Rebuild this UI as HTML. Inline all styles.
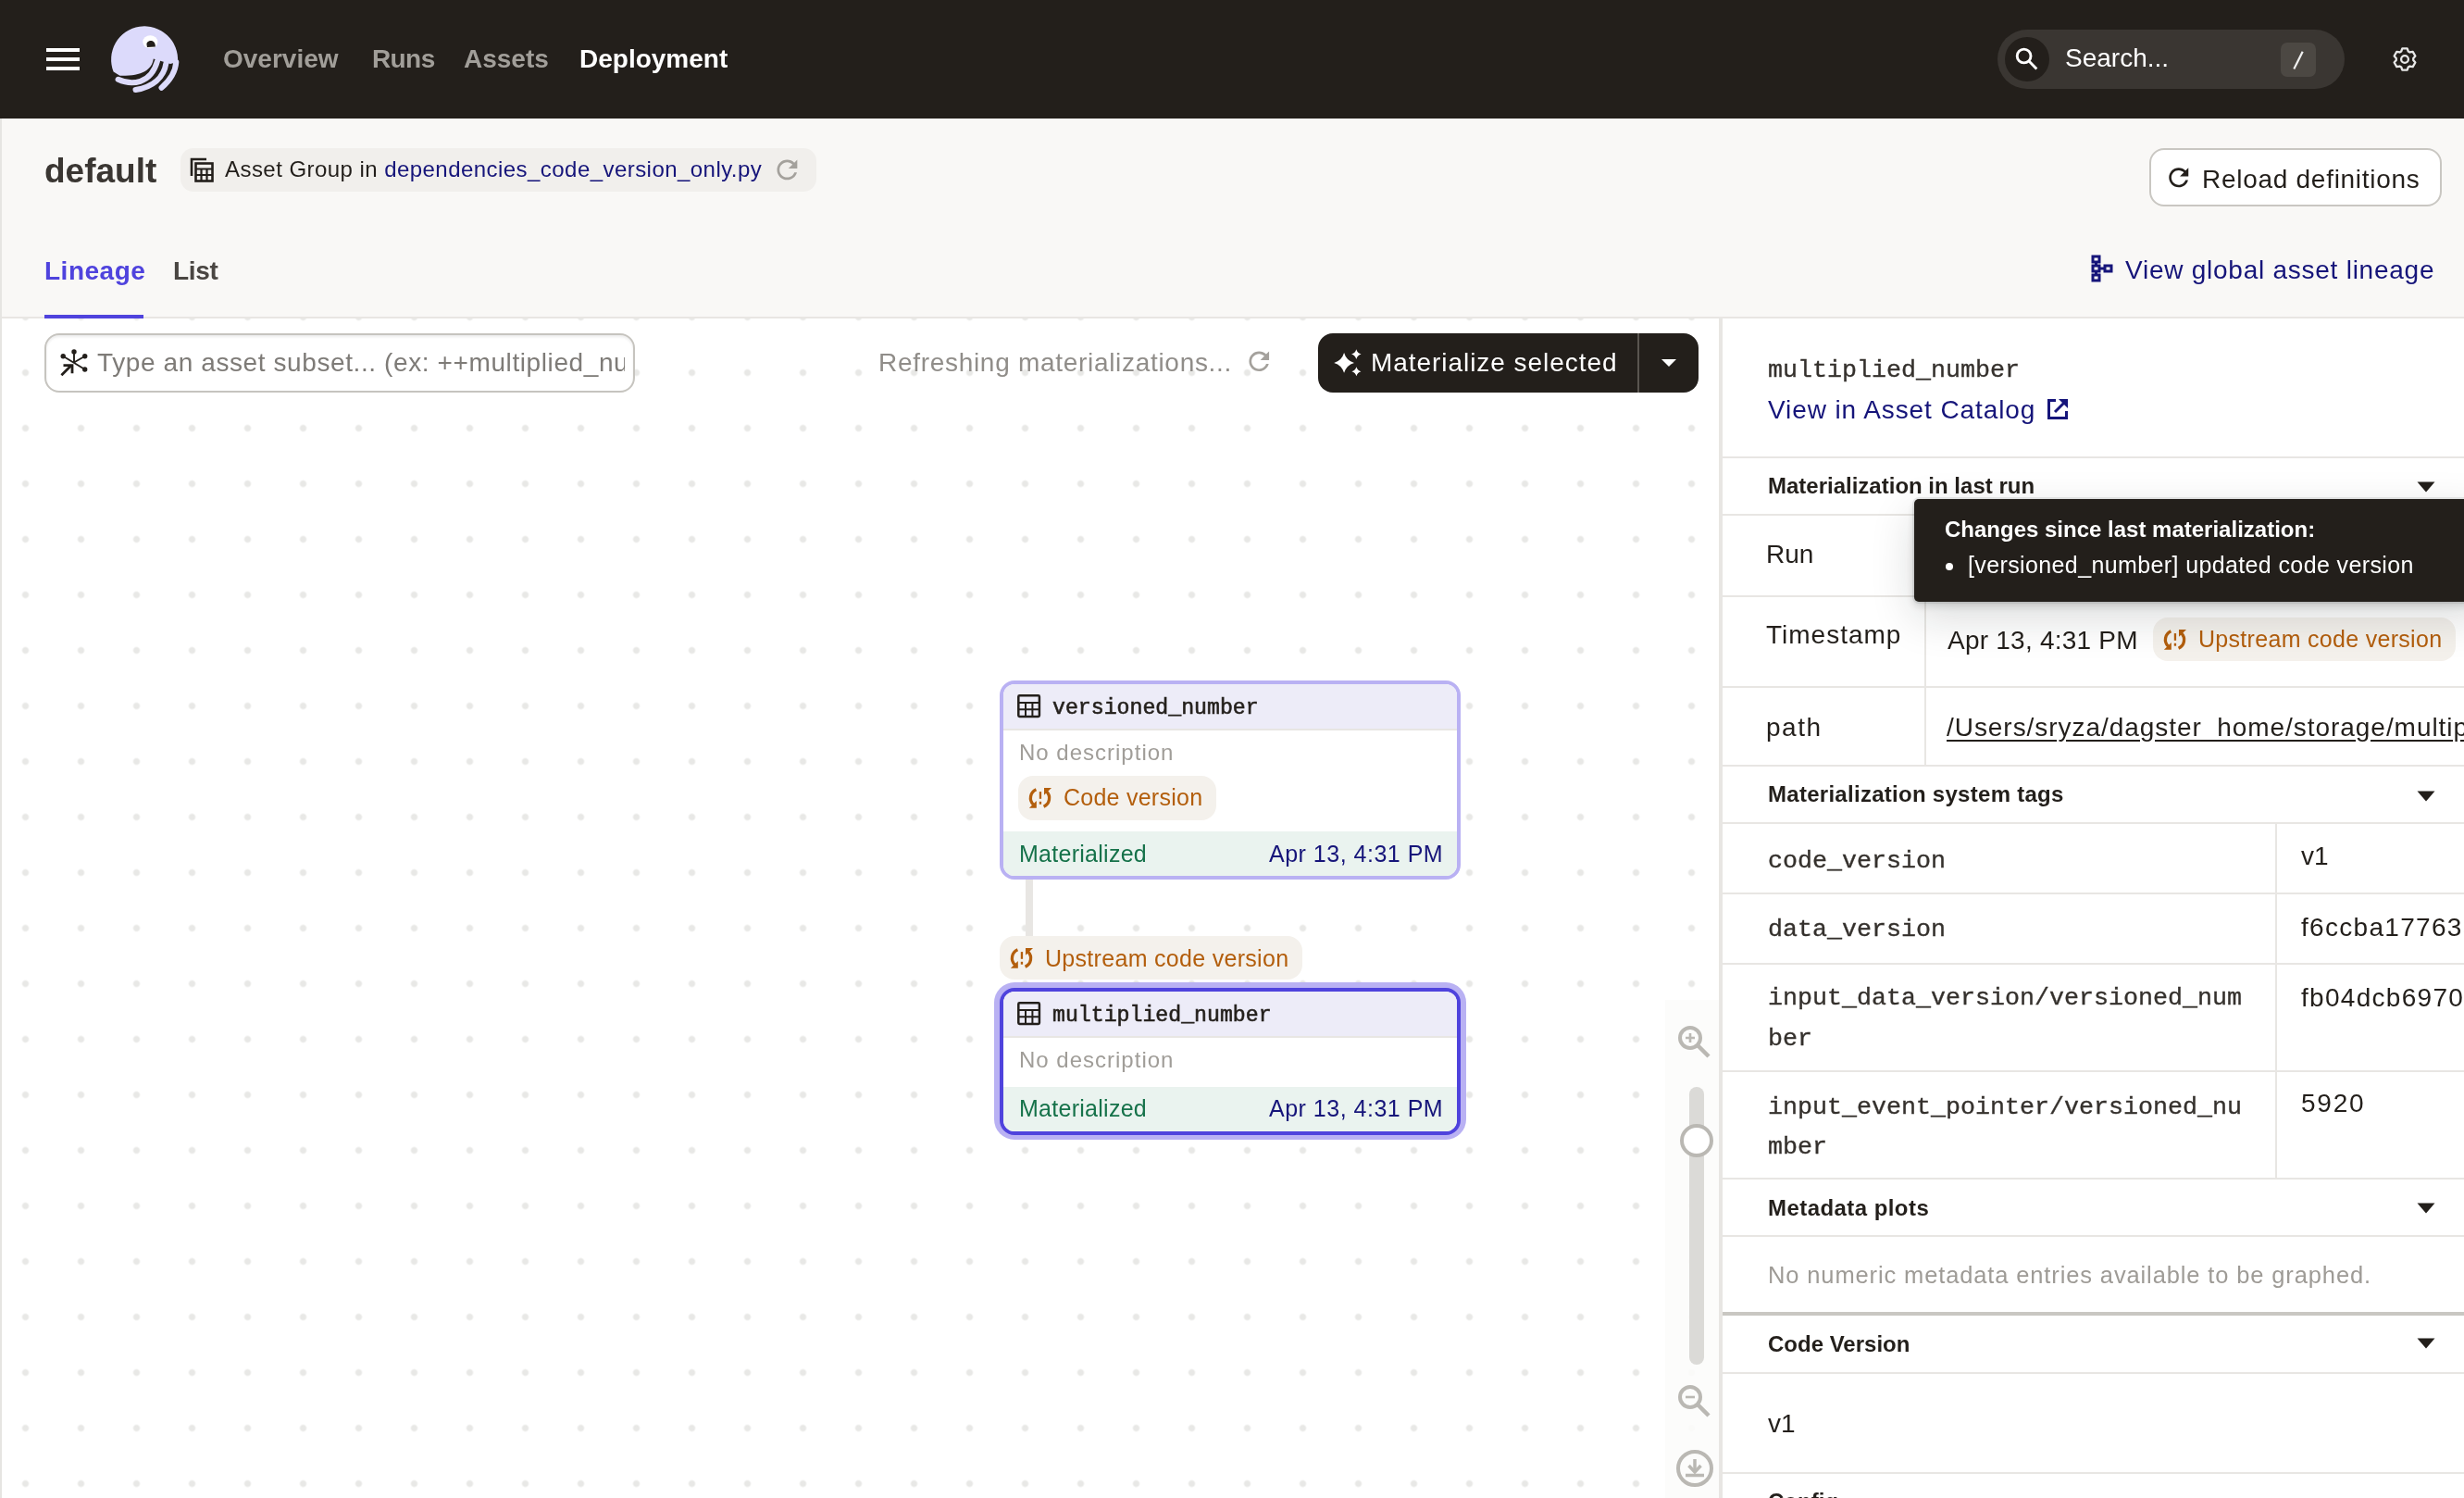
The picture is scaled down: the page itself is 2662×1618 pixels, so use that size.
<!DOCTYPE html>
<html><head><meta charset="utf-8">
<style>
html,body{margin:0;padding:0;}
.t{will-change:transform;}
body{width:2662px;height:1618px;overflow:hidden;position:relative;background:#fff;font-family:"Liberation Sans",sans-serif;color:#231F1B;}
.a{position:absolute;}
.t{position:absolute;white-space:nowrap;line-height:1;}
.mono{font-family:"Liberation Mono",monospace;-webkit-text-stroke:0.35px currentColor;}
svg{position:absolute;overflow:visible;}
</style></head><body>

<!-- TOP NAV -->
<div class="a" style="left:0;top:0;width:2662px;height:128px;background:#231F1B;"></div>
<div class="a" style="left:50px;top:52px;width:36px;height:4px;background:#fff;"></div>
<div class="a" style="left:50px;top:62px;width:36px;height:4px;background:#fff;"></div>
<div class="a" style="left:50px;top:72px;width:36px;height:4px;background:#fff;"></div>
<!-- logo -->
<svg style="left:112px;top:20px;" width="88" height="88" viewBox="0 0 88 88">
  <path d="M10.6 57.5 A36 36 0 1 1 80 47 L72 49 L62 46 L53.8 43.5 C52 56 41 62.2 17.5 61.8 Z" fill="#DCDAFB"/>
  <path d="M15.6 65.8 C30 72.5 51 71 58 46" stroke="#DCDAFB" stroke-width="6" fill="none" stroke-linecap="round"/>
  <path d="M34.5 77 C53 74 65 64 67.5 48" stroke="#DCDAFB" stroke-width="6" fill="none" stroke-linecap="round"/>
  <path d="M62.5 74.8 C71.5 67 77.5 58 78.3 47" stroke="#DCDAFB" stroke-width="6" fill="none" stroke-linecap="round"/>
  <ellipse cx="50.3" cy="25.2" rx="8" ry="7" fill="#fff"/>
  <path d="M46.5 28.5 C46 25.5 48.5 24 51 24 C54 24 56 26.5 55.8 30.5 L47 31 Z" fill="#231F1B"/>
</svg>
<div class="t" style="left:241px;top:50px;font-size:28px;font-weight:bold;color:#A19E99;">Overview</div>
<div class="t" style="left:402px;top:50px;font-size:28px;font-weight:bold;color:#A19E99;letter-spacing:-0.6px;">Runs</div>
<div class="t" style="left:501px;top:50px;font-size:28px;font-weight:bold;color:#A19E99;">Assets</div>
<div class="t" style="left:626px;top:50px;font-size:28px;font-weight:bold;color:#fff;">Deployment</div>
<!-- search -->
<div class="a" style="left:2158px;top:32px;width:375px;height:64px;border-radius:32px;background:#3A3632;"></div>
<div class="a" style="left:2166px;top:40px;width:48px;height:48px;border-radius:24px;background:#231F1B;"></div>
<svg style="left:2176px;top:50px;" width="28" height="28" viewBox="0 0 28 28">
  <circle cx="10.6" cy="10.5" r="7.4" stroke="#fff" stroke-width="2.9" fill="none"/>
  <path d="M15.8 15.8 L24.3 24.5" stroke="#fff" stroke-width="2.9"/>
</svg>
<div class="t" style="left:2231px;top:49px;font-size:28px;color:#fff;">Search...</div>
<div class="a" style="left:2464px;top:46px;width:38px;height:37px;border-radius:7px;background:#4C4843;"></div>
<svg style="left:2464px;top:46px;" width="38" height="37" viewBox="0 0 38 37"><path d="M14.3 28.5 L23.7 9.8" stroke="#F0F0F0" stroke-width="2.2"/></svg>
<!-- gear -->
<svg style="left:2585px;top:51px;" width="26" height="26" viewBox="0 0 26 26">
  <path d="M9.22 4.50 L10.32 1.40 L15.68 1.40 L16.78 4.50 L18.47 5.48 L21.70 4.88 L24.38 9.52 L22.25 12.03 L22.25 13.97 L24.38 16.48 L21.70 21.12 L18.47 20.52 L16.78 21.50 L15.68 24.60 L10.32 24.60 L9.22 21.50 L7.53 20.52 L4.30 21.12 L1.62 16.48 L3.75 13.97 L3.75 12.03 L1.62 9.52 L4.30 4.88 L7.53 5.48 Z" stroke="#E8E8E8" stroke-width="2.3" fill="none" stroke-linejoin="round"/>
  <circle cx="13" cy="13" r="3.9" stroke="#E8E8E8" stroke-width="2.3" fill="none"/>
</svg>

<!-- left border -->
<div class="a" style="left:0;top:128px;width:2px;height:1490px;background:#E6E5E2;"></div>

<!-- PAGE HEADER -->
<div class="a" style="left:2px;top:128px;width:2660px;height:214px;background:#F9F8F6;"></div>
<div class="a" style="left:2px;top:342px;width:2660px;height:2px;background:#E8E6E3;"></div>


<div class="t" style="left:48px;top:166px;font-size:37px;font-weight:bold;color:#3A3632;">default</div>
<div class="a" style="left:195px;top:160px;width:687px;height:47px;border-radius:14px;background:#F1EFEC;"></div>
<svg style="left:204px;top:169px;" width="30" height="30" viewBox="0 0 30 30">
  <path d="M3 21 V3 H19" stroke="#231F1B" stroke-width="2.6" fill="none"/>
  <rect x="7.5" y="7.5" width="18" height="19" stroke="#231F1B" stroke-width="2.6" fill="none"/>
  <path d="M7.5 13.5 H25.5 M7.5 20 H25.5 M13.5 13.5 V26.5 M19.5 13.5 V26.5" stroke="#231F1B" stroke-width="2.2"/>
</svg>
<div class="t" style="left:243px;top:171px;font-size:24px;color:#231F1B;letter-spacing:0.45px;">Asset Group in <span style="color:#16157A;">dependencies_code_version_only.py</span></div>
<svg style="left:833.8px;top:167.3px;" width="32.8" height="32.8" viewBox="0 0 24 24"><path d="M17.65 6.35C16.2 4.9 14.21 4 12 4c-4.42 0-7.99 3.58-7.99 8s3.57 8 7.99 8c3.73 0 6.84-2.55 7.73-6h-2.08c-.82 2.33-3.04 4-5.65 4-3.31 0-6-2.69-6-6s2.69-6 6-6c1.66 0 3.14.69 4.22 1.78L13 11h7V4l-2.35 2.35z" fill="#A4A19C"/></svg>
<!-- reload button -->
<div class="a" style="left:2322px;top:160px;width:312px;height:59px;border:2px solid #C9C7C2;border-radius:16px;background:#fff;"></div>
<svg style="left:2338.2px;top:176.1px;" width="31.5" height="31.5" viewBox="0 0 24 24"><path d="M17.65 6.35C16.2 4.9 14.21 4 12 4c-4.42 0-7.99 3.58-7.99 8s3.57 8 7.99 8c3.73 0 6.84-2.55 7.73-6h-2.08c-.82 2.33-3.04 4-5.65 4-3.31 0-6-2.69-6-6s2.69-6 6-6c1.66 0 3.14.69 4.22 1.78L13 11h7V4l-2.35 2.35z" fill="#231F1B"/></svg>
<div class="t" style="left:2379px;top:180px;font-size:28px;color:#231F1B;letter-spacing:0.72px;">Reload definitions</div>
<!-- tabs -->
<div class="t" style="left:48px;top:279px;font-size:28px;font-weight:bold;color:#4F43DD;letter-spacing:0.5px;">Lineage</div>
<div class="t" style="left:187px;top:279px;font-size:28px;font-weight:bold;color:#4A4642;letter-spacing:-0.3px;">List</div>
<div class="a" style="left:48px;top:340px;width:107px;height:4px;background:#4F43DD;"></div>
<svg style="left:2258px;top:274px;" width="28" height="32" viewBox="0 0 28 32">
  <rect x="3" y="3" width="7" height="6" stroke="#16157A" stroke-width="3" fill="none"/>
  <rect x="3" y="13" width="7" height="6" stroke="#16157A" stroke-width="3" fill="none"/>
  <rect x="3" y="23" width="7" height="6" stroke="#16157A" stroke-width="3" fill="none"/>
  <rect x="16" y="13" width="7" height="6" stroke="#16157A" stroke-width="3" fill="none"/>
  <path d="M6.5 9 V13 M6.5 19 V23 M10 16 H16" stroke="#16157A" stroke-width="3"/>
</svg>
<div class="t" style="left:2296px;top:278px;font-size:28px;color:#16157A;letter-spacing:0.75px;">View global asset lineage</div>

<!-- GRAPH AREA -->
<div class="a" style="left:2px;top:344px;width:1855px;height:1274px;background-color:#fff;background-image:radial-gradient(circle at 30px 30px,#E8E8E6 3.1px,rgba(255,255,255,0) 4.1px);background-size:60px 60px;background-position:-4.5px -31.5px;"></div>
<!-- asset selection input -->
<div class="a" style="left:48px;top:360px;width:634px;height:60px;border:2px solid #C6C4BF;border-radius:16px;background:#fff;box-shadow:inset 0 2px 3px rgba(0,0,0,0.08);overflow:hidden;"></div>
<svg style="left:64px;top:376px;" width="32" height="32" viewBox="0 0 32 32">
  <circle cx="16" cy="3.9" r="2.7" fill="#231F1B"/>
  <circle cx="4.2" cy="8.7" r="2.7" fill="#231F1B"/>
  <circle cx="27.7" cy="8.7" r="2.7" fill="#231F1B"/>
  <circle cx="27.7" cy="23" r="2.7" fill="#231F1B"/>
  <path d="M16 4 V15.3 M4.2 8.7 L27.7 23 M27.7 8.7 L16.3 15.3" stroke="#231F1B" stroke-width="1.9"/>
  <path d="M2.4 29.2 L13.2 18.6" stroke="#231F1B" stroke-width="2.8"/>
  <path d="M4.5 18.6 H14 V27.2" stroke="#231F1B" stroke-width="2.8" fill="none"/>
</svg>
<div class="a" style="left:105px;top:362px;width:570px;height:60px;overflow:hidden;">
  <div class="t" style="left:0;top:16px;font-size:28px;color:#7E7B77;letter-spacing:0.6px;">Type an asset subset... (ex: ++multiplied_number)</div>
</div>
<div class="t" style="left:949px;top:378px;font-size:28px;color:#908D89;letter-spacing:0.7px;">Refreshing materializations...</div>
<svg style="left:1343.75px;top:373.75px;" width="32.5" height="32.5" viewBox="0 0 24 24"><path d="M17.65 6.35C16.2 4.9 14.21 4 12 4c-4.42 0-7.99 3.58-7.99 8s3.57 8 7.99 8c3.73 0 6.84-2.55 7.73-6h-2.08c-.82 2.33-3.04 4-5.65 4-3.31 0-6-2.69-6-6s2.69-6 6-6c1.66 0 3.14.69 4.22 1.78L13 11h7V4l-2.35 2.35z" fill="#A4A19C"/></svg>
<!-- materialize button -->
<div class="a" style="left:1424px;top:360px;width:411px;height:64px;border-radius:16px;background:#231F1B;"></div>
<div class="a" style="left:1769px;top:360px;width:2px;height:64px;background:#5A5550;"></div>
<svg style="left:1440px;top:377px;" width="32" height="32" viewBox="0 0 32 32">
  <path d="M12.1 4.0 Q14.498 12.502 23.0 14.9 Q14.498 17.298000000000002 12.1 25.8 Q9.702 17.298000000000002 1.1999999999999993 14.9 Q9.702 12.502 12.1 4.0 Z" fill="#fff"/>
  <path d="M25.3 0.2999999999999998 Q26.466 4.433999999999999 30.6 5.6 Q26.466 6.766 25.3 10.899999999999999 Q24.134 6.766 20.0 5.6 Q24.134 4.433999999999999 25.3 0.2999999999999998 Z" fill="#fff"/>
  <path d="M25.4 19.2 Q26.5 23.099999999999998 30.4 24.2 Q26.5 25.3 25.4 29.2 Q24.299999999999997 25.3 20.4 24.2 Q24.299999999999997 23.099999999999998 25.4 19.2 Z" fill="#fff"/>
</svg>
<div class="t" style="left:1481px;top:378px;font-size:28px;color:#fff;letter-spacing:0.95px;">Materialize selected</div>
<svg style="left:1794px;top:387px;" width="18" height="10" viewBox="0 0 18 10"><path d="M1 1 H17 L9 9 Z" fill="#fff"/></svg>


<!-- NODE 1 -->
<div class="a" style="left:1080px;top:735px;width:490px;height:207px;border:4px solid #B9B1F3;border-radius:16px;background:#fff;overflow:hidden;">
  <div class="a" style="left:0;top:0;width:490px;height:48px;background:#EDECF8;border-bottom:2px solid #E8E6E3;"></div>
  <div class="a" style="left:0;top:159px;width:490px;height:48px;background:#EAF3EF;"></div>
</div>
<svg style="left:1099px;top:750px;" width="26" height="26" viewBox="0 0 26 26">
  <rect x="1.3" y="1.3" width="22.6" height="22.6" rx="1.2" stroke="#231F1B" stroke-width="2.5" fill="none"/>
  <path d="M1.3 9 H24 M1.3 16.2 H24 M9 9 V24 M16.4 9 V24" stroke="#231F1B" stroke-width="2"/>
</svg>
<div class="t mono" style="left:1137px;top:754px;font-size:23.2px;color:#231F1B;-webkit-text-stroke:0.6px #231F1B;">versioned_number</div>
<div class="t" style="left:1101px;top:801px;font-size:24px;color:#A09D98;letter-spacing:1px;">No description</div>
<div class="a" style="left:1100px;top:838px;width:214px;height:48px;border-radius:16px;background:#F4F1EC;"></div>
<svg style="left:1111px;top:851px;" width="26" height="24" viewBox="0 0 26 24">
  <path d="M8.4 1.8 A10 10 0 0 0 5.4 18.1" stroke="#B35E0C" stroke-width="3.3" fill="none"/>
  <path d="M0.9 21.7 L8.8 21.7 L8.8 14 Z" fill="#B35E0C"/>
  <path d="M16.6 20.2 A10 10 0 0 0 19.6 3.9" stroke="#B35E0C" stroke-width="3.3" fill="none"/>
  <path d="M17 0 L25 0 L17 7.8 Z" fill="#B35E0C"/>
  <rect x="11.8" y="4.1" width="2.3" height="7.7" fill="#B35E0C"/>
  <rect x="11.8" y="14.8" width="2.3" height="2.9" fill="#B35E0C"/>
</svg>
<div class="t" style="left:1149px;top:849px;font-size:25px;color:#B35E0C;letter-spacing:0.25px;">Code version</div>
<div class="t" style="left:1101px;top:910px;font-size:25px;color:#16724A;letter-spacing:0.27px;">Materialized</div>
<div class="t" style="left:1371px;top:910px;font-size:25px;color:#16157A;letter-spacing:0.5px;">Apr 13, 4:31 PM</div>
<!-- edge -->
<div class="a" style="left:1108px;top:950px;width:8px;height:61px;background:#E8E6E3;"></div>
<div class="a" style="left:1080px;top:1011px;width:327px;height:47px;border-radius:16px;background:#F4F1EC;"></div>
<svg style="left:1091px;top:1024px;" width="26" height="24" viewBox="0 0 26 24">
  <path d="M8.4 1.8 A10 10 0 0 0 5.4 18.1" stroke="#B35E0C" stroke-width="3.3" fill="none"/>
  <path d="M0.9 21.7 L8.8 21.7 L8.8 14 Z" fill="#B35E0C"/>
  <path d="M16.6 20.2 A10 10 0 0 0 19.6 3.9" stroke="#B35E0C" stroke-width="3.3" fill="none"/>
  <path d="M17 0 L25 0 L17 7.8 Z" fill="#B35E0C"/>
  <rect x="11.8" y="4.1" width="2.3" height="7.7" fill="#B35E0C"/>
  <rect x="11.8" y="14.8" width="2.3" height="2.9" fill="#B35E0C"/>
</svg>
<div class="t" style="left:1129px;top:1023px;font-size:25px;color:#B35E0C;letter-spacing:0.3px;">Upstream code version</div>
<!-- NODE 2 -->
<div class="a" style="left:1074px;top:1061px;width:510px;height:170px;border-radius:22px;background:#B9B1F3;"></div>
<div class="a" style="left:1080px;top:1067px;width:490px;height:151px;border:4px solid #4F43DD;border-radius:16px;background:#fff;overflow:hidden;">
  <div class="a" style="left:0;top:0;width:490px;height:48px;background:#EDECF8;border-bottom:2px solid #E8E6E3;"></div>
  <div class="a" style="left:0;top:103px;width:490px;height:48px;background:#EAF3EF;"></div>
</div>
<svg style="left:1099px;top:1082px;" width="26" height="26" viewBox="0 0 26 26">
  <rect x="1.3" y="1.3" width="22.6" height="22.6" rx="1.2" stroke="#231F1B" stroke-width="2.5" fill="none"/>
  <path d="M1.3 9 H24 M1.3 16.2 H24 M9 9 V24 M16.4 9 V24" stroke="#231F1B" stroke-width="2"/>
</svg>
<div class="t mono" style="left:1137px;top:1086px;font-size:23.2px;color:#231F1B;-webkit-text-stroke:0.6px #231F1B;">multiplied_number</div>
<div class="t" style="left:1101px;top:1133px;font-size:24px;color:#A09D98;letter-spacing:1px;">No description</div>
<div class="t" style="left:1101px;top:1185px;font-size:25px;color:#16724A;letter-spacing:0.27px;">Materialized</div>
<div class="t" style="left:1371px;top:1185px;font-size:25px;color:#16157A;letter-spacing:0.5px;">Apr 13, 4:31 PM</div>

<!-- ZOOM CONTROLS -->
<div class="a" style="left:1799px;top:1080px;width:58px;height:538px;background:rgba(252,252,251,0.88);"></div>
<svg style="left:1808px;top:1104px;" width="44" height="44" viewBox="0 0 44 44">
  <circle cx="18" cy="17" r="11" stroke="#BAB8B3" stroke-width="4" fill="none"/>
  <path d="M26 25 L38 37" stroke="#BAB8B3" stroke-width="4.5"/>
  <path d="M13 17 H23 M18 12 V22" stroke="#BAB8B3" stroke-width="2.6"/>
</svg>
<div class="a" style="left:1825px;top:1174px;width:16px;height:300px;border-radius:8px;background:#DBDAD7;"></div>
<div class="a" style="left:1815px;top:1214px;width:28px;height:28px;border:4px solid #BAB8B3;border-radius:50%;background:#fff;"></div>
<svg style="left:1808px;top:1492px;" width="44" height="44" viewBox="0 0 44 44">
  <circle cx="18" cy="17" r="11" stroke="#BAB8B3" stroke-width="4" fill="none"/>
  <path d="M26 25 L38 37" stroke="#BAB8B3" stroke-width="4.5"/>
  <path d="M13 17 H23" stroke="#BAB8B3" stroke-width="2.6"/>
</svg>
<svg style="left:1808px;top:1563px;" width="46" height="46" viewBox="0 0 46 46">
  <circle cx="23" cy="23" r="18" stroke="#BAB8B3" stroke-width="4" fill="none"/>
  <path d="M23 13 V25" stroke="#BAB8B3" stroke-width="3.5"/>
  <path d="M16.5 20 L23 27 L29.5 20" stroke="#BAB8B3" stroke-width="3.5" fill="none"/>
  <path d="M13 30.5 H33" stroke="#BAB8B3" stroke-width="3.5"/>
</svg>


<!-- RIGHT PANEL -->
<div class="a" style="left:1857px;top:344px;width:805px;height:1274px;background:#fff;"></div>
<div class="a" style="left:1857px;top:344px;width:4px;height:1274px;background:#E8E6E3;"></div>
<div class="t mono" style="left:1910px;top:387px;font-size:26.67px;color:#35312D;">multiplied_number</div>
<div class="t" style="left:1910px;top:429px;font-size:28px;color:#16157A;letter-spacing:0.9px;">View in Asset Catalog</div>
<svg style="left:2210px;top:429px;" width="26" height="26" viewBox="0 0 26 26">
  <path d="M11 3.5 H3.5 V22.5 H22.5 V15" stroke="#16157A" stroke-width="3" fill="none"/>
  <path d="M10 16 L21 5" stroke="#16157A" stroke-width="3"/>
  <path d="M14 2 H24 V12 Z" fill="#16157A"/>
</svg>
<div class="a" style="left:1861px;top:493px;width:801px;height:2px;background:#E8E6E3;"></div>
<div class="t" style="left:1910px;top:513px;font-size:24px;font-weight:bold;color:#231F1B;">Materialization in last run</div>
<svg style="left:2611px;top:520px;" width="20" height="12" viewBox="0 0 20 12"><path d="M0.5 0.5 H19.5 L10 11.5 Z" fill="#231F1B"/></svg>
<div class="a" style="left:1861px;top:555px;width:801px;height:2px;background:#E8E6E3;"></div>
<div class="t" style="left:1908px;top:585px;font-size:28px;color:#231F1B;">Run</div>
<div class="a" style="left:1861px;top:643px;width:801px;height:2px;background:#E8E6E3;"></div>
<div class="a" style="left:2079px;top:645px;width:2px;height:182px;background:#E8E6E3;"></div>
<div class="t" style="left:1908px;top:672px;font-size:28px;color:#231F1B;letter-spacing:1px;">Timestamp</div>
<div class="t" style="left:2104px;top:678px;font-size:28px;color:#231F1B;letter-spacing:0.23px;">Apr 13, 4:31 PM</div>
<div class="a" style="left:2326px;top:667px;width:327px;height:47px;border-radius:16px;background:#F4F1EC;"></div>
<svg style="left:2337px;top:680px;" width="26" height="24" viewBox="0 0 26 24">
  <path d="M8.4 1.8 A10 10 0 0 0 5.4 18.1" stroke="#B35E0C" stroke-width="3.3" fill="none"/>
  <path d="M0.9 21.7 L8.8 21.7 L8.8 14 Z" fill="#B35E0C"/>
  <path d="M16.6 20.2 A10 10 0 0 0 19.6 3.9" stroke="#B35E0C" stroke-width="3.3" fill="none"/>
  <path d="M17 0 L25 0 L17 7.8 Z" fill="#B35E0C"/>
  <rect x="11.8" y="4.1" width="2.3" height="7.7" fill="#B35E0C"/>
  <rect x="11.8" y="14.8" width="2.3" height="2.9" fill="#B35E0C"/>
</svg>
<div class="t" style="left:2375px;top:678px;font-size:25px;color:#B35E0C;letter-spacing:0.3px;">Upstream code version</div>
<div class="a" style="left:1861px;top:741px;width:801px;height:2px;background:#E8E6E3;"></div>
<div class="t" style="left:1908px;top:772px;font-size:28px;color:#231F1B;letter-spacing:1.5px;">path</div>
<div class="t" style="left:2103px;top:772px;font-size:28px;color:#231F1B;text-decoration:underline;text-underline-offset:4px;letter-spacing:0.95px;">/Users/sryza/dagster_home/storage/multiplied_number</div>
<div class="a" style="left:1861px;top:826px;width:801px;height:2px;background:#E8E6E3;"></div>
<div class="t" style="left:1910px;top:846px;font-size:24px;font-weight:bold;color:#231F1B;letter-spacing:0.28px;">Materialization system tags</div>
<svg style="left:2611px;top:854px;" width="20" height="12" viewBox="0 0 20 12"><path d="M0.5 0.5 H19.5 L10 11.5 Z" fill="#231F1B"/></svg>
<div class="a" style="left:1861px;top:888px;width:801px;height:2px;background:#E8E6E3;"></div>
<div class="a" style="left:2458px;top:890px;width:2px;height:383px;background:#E8E6E3;"></div>
<div class="t mono" style="left:1910px;top:917px;font-size:26.67px;color:#35312D;">code_version</div>
<div class="t" style="left:2486px;top:911px;font-size:28px;color:#231F1B;">v1</div>
<div class="a" style="left:1861px;top:964px;width:801px;height:2px;background:#E8E6E3;"></div>
<div class="t mono" style="left:1910px;top:991px;font-size:26.67px;color:#35312D;">data_version</div>
<div class="t" style="left:2486px;top:988px;font-size:28px;color:#231F1B;letter-spacing:1.3px;">f6ccba17763a8b9c2e0d</div>
<div class="a" style="left:1861px;top:1040px;width:801px;height:2px;background:#E8E6E3;"></div>
<div class="t mono" style="left:1910px;top:1065px;font-size:26.67px;color:#35312D;">input_data_version/versioned_num</div>
<div class="t mono" style="left:1910px;top:1109px;font-size:26.67px;color:#35312D;">ber</div>
<div class="t" style="left:2486px;top:1064px;font-size:28px;color:#231F1B;letter-spacing:1.3px;">fb04dcb6970e1a2b3c4d</div>
<div class="a" style="left:1861px;top:1156px;width:801px;height:2px;background:#E8E6E3;"></div>
<div class="t mono" style="left:1910px;top:1183px;font-size:26.67px;color:#35312D;">input_event_pointer/versioned_nu</div>
<div class="t mono" style="left:1910px;top:1226px;font-size:26.67px;color:#35312D;">mber</div>
<div class="t" style="left:2486px;top:1178px;font-size:28px;color:#231F1B;letter-spacing:1.8px;">5920</div>
<div class="a" style="left:1861px;top:1272px;width:801px;height:2px;background:#E8E6E3;"></div>
<div class="t" style="left:1910px;top:1293px;font-size:24px;font-weight:bold;color:#231F1B;letter-spacing:0.44px;">Metadata plots</div>
<svg style="left:2611px;top:1299px;" width="20" height="12" viewBox="0 0 20 12"><path d="M0.5 0.5 H19.5 L10 11.5 Z" fill="#231F1B"/></svg>
<div class="a" style="left:1861px;top:1334px;width:801px;height:2px;background:#E8E6E3;"></div>
<div class="t" style="left:1910px;top:1365px;font-size:25.5px;color:#9E9B96;letter-spacing:0.87px;">No numeric metadata entries available to be graphed.</div>
<div class="a" style="left:1861px;top:1417px;width:801px;height:4px;background:#C9C7C2;"></div>
<div class="t" style="left:1910px;top:1440px;font-size:24px;font-weight:bold;color:#231F1B;">Code Version</div>
<svg style="left:2611px;top:1445px;" width="20" height="12" viewBox="0 0 20 12"><path d="M0.5 0.5 H19.5 L10 11.5 Z" fill="#231F1B"/></svg>
<div class="a" style="left:1861px;top:1482px;width:801px;height:2px;background:#E8E6E3;"></div>
<div class="t" style="left:1910px;top:1524px;font-size:28px;color:#231F1B;">v1</div>
<div class="a" style="left:1861px;top:1590px;width:801px;height:2px;background:#E8E6E3;"></div>
<div class="t" style="left:1910px;top:1610px;font-size:24px;font-weight:bold;color:#231F1B;">Config</div>

<!-- TOOLTIP -->
<div class="a" style="left:2068px;top:539px;width:620px;height:111px;border-radius:5px;background:#231F1B;box-shadow:0 0 0 2px rgba(16,22,26,.08),0 4px 8px rgba(16,22,26,.16),0 16px 48px rgba(16,22,26,.16);"></div>
<div class="t" style="left:2101px;top:560px;font-size:24px;font-weight:bold;color:#fff;">Changes since last materialization:</div>
<div class="a" style="left:2102px;top:608px;width:8px;height:8px;border-radius:50%;background:#fff;"></div>
<div class="t" style="left:2126px;top:598px;font-size:25px;color:#fff;letter-spacing:0.38px;">[versioned_number] updated code version</div>

</body></html>
